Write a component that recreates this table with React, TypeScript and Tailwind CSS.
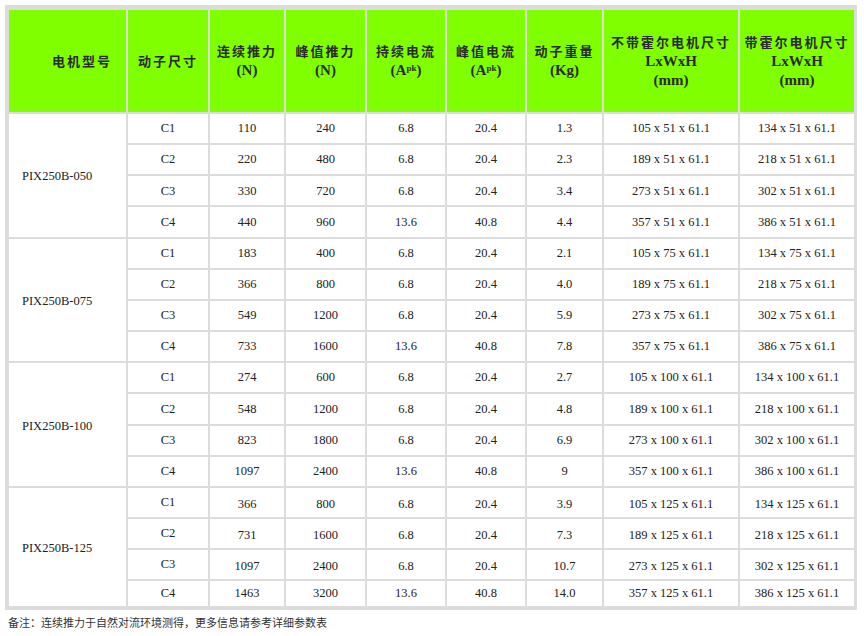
const serif = "font-['Liberation_Serif','Noto_Sans_CJK_SC',serif]";

type Row = { c: string; cont: string; peak: string; ic: string; ip: string; kg: string; a: string; b: string };

const groups: { model: string; rows: Row[] }[] = [
  {
    model: "PIX250B-050",
    rows: [
      { c: "C1", cont: "110", peak: "240", ic: "6.8", ip: "20.4", kg: "1.3", a: "105 x 51 x 61.1", b: "134 x 51 x 61.1" },
      { c: "C2", cont: "220", peak: "480", ic: "6.8", ip: "20.4", kg: "2.3", a: "189 x 51 x 61.1", b: "218 x 51 x 61.1" },
      { c: "C3", cont: "330", peak: "720", ic: "6.8", ip: "20.4", kg: "3.4", a: "273 x 51 x 61.1", b: "302 x 51 x 61.1" },
      { c: "C4", cont: "440", peak: "960", ic: "13.6", ip: "40.8", kg: "4.4", a: "357 x 51 x 61.1", b: "386 x 51 x 61.1" },
    ],
  },
  {
    model: "PIX250B-075",
    rows: [
      { c: "C1", cont: "183", peak: "400", ic: "6.8", ip: "20.4", kg: "2.1", a: "105 x 75 x 61.1", b: "134 x 75 x 61.1" },
      { c: "C2", cont: "366", peak: "800", ic: "6.8", ip: "20.4", kg: "4.0", a: "189 x 75 x 61.1", b: "218 x 75 x 61.1" },
      { c: "C3", cont: "549", peak: "1200", ic: "6.8", ip: "20.4", kg: "5.9", a: "273 x 75 x 61.1", b: "302 x 75 x 61.1" },
      { c: "C4", cont: "733", peak: "1600", ic: "13.6", ip: "40.8", kg: "7.8", a: "357 x 75 x 61.1", b: "386 x 75 x 61.1" },
    ],
  },
  {
    model: "PIX250B-100",
    rows: [
      { c: "C1", cont: "274", peak: "600", ic: "6.8", ip: "20.4", kg: "2.7", a: "105 x 100 x 61.1", b: "134 x 100 x 61.1" },
      { c: "C2", cont: "548", peak: "1200", ic: "6.8", ip: "20.4", kg: "4.8", a: "189 x 100 x 61.1", b: "218 x 100 x 61.1" },
      { c: "C3", cont: "823", peak: "1800", ic: "6.8", ip: "20.4", kg: "6.9", a: "273 x 100 x 61.1", b: "302 x 100 x 61.1" },
      { c: "C4", cont: "1097", peak: "2400", ic: "13.6", ip: "40.8", kg: "9", a: "357 x 100 x 61.1", b: "386 x 100 x 61.1" },
    ],
  },
  {
    model: "PIX250B-125",
    rows: [
      { c: "C1", cont: "366", peak: "800", ic: "6.8", ip: "20.4", kg: "3.9", a: "105 x 125 x 61.1", b: "134 x 125 x 61.1" },
      { c: "C2", cont: "731", peak: "1600", ic: "6.8", ip: "20.4", kg: "7.3", a: "189 x 125 x 61.1", b: "218 x 125 x 61.1" },
      { c: "C3", cont: "1097", peak: "2400", ic: "6.8", ip: "20.4", kg: "10.7", a: "273 x 125 x 61.1", b: "302 x 125 x 61.1" },
      { c: "C4", cont: "1463", peak: "3200", ic: "13.6", ip: "40.8", kg: "14.0", a: "357 x 125 x 61.1", b: "386 x 125 x 61.1" },
    ],
  },
];

const Head = ({ children, className = "" }: { children: React.ReactNode; className?: string }) => (
  <div className={`flex flex-col items-center justify-center bg-[#80ff00] text-center text-[13px] leading-[19px] font-bold text-[#2a2a2a] ${className}`}>
    {children}
  </div>
);

// CJK label line and latin unit line
const Cjk = ({ children }: { children: React.ReactNode }) => <span className="tracking-[2px]">{children}</span>;
const Unit = ({ children }: { children: React.ReactNode }) => <span className="text-[15px]">{children}</span>;
const Pk = () => <sup className="text-[9px] font-bold">pk</sup>;

export default function App() {
  return (
    <div className={`bg-white ${serif}`}>
      <div className="ml-[5px] mt-[5px] w-[852px] bg-[#dcdcdc] pt-[5px] pr-[3px] pb-[4px] pl-[4px]">
        <div className="grid grid-cols-[117px_80px_74px_79px_78px_78px_75px_134px_114px] grid-rows-[102px_repeat(12,29.17px)_29.4px_28.7px_28.7px_25.7px] gap-[2px]">
          <Head className="items-start pl-[43px]">
            <Cjk>电机型号</Cjk>
          </Head>
          <Head>
            <Cjk>动子尺寸</Cjk>
          </Head>
          <Head>
            <Cjk>连续推力</Cjk>
            <Unit>(N)</Unit>
          </Head>
          <Head>
            <Cjk>峰值推力</Cjk>
            <Unit>(N)</Unit>
          </Head>
          <Head>
            <Cjk>持续电流</Cjk>
            <Unit>
              (A<Pk />)
            </Unit>
          </Head>
          <Head>
            <Cjk>峰值电流</Cjk>
            <Unit>
              (A<Pk />)
            </Unit>
          </Head>
          <Head>
            <Cjk>动子重量</Cjk>
            <Unit>(Kg)</Unit>
          </Head>
          <Head className="leading-[18px]">
            <Cjk>不带霍尔电机尺寸</Cjk>
            <Unit>LxWxH</Unit>
            <Unit>(mm)</Unit>
          </Head>
          <Head className="leading-[18px]">
            <Cjk>带霍尔电机尺寸</Cjk>
            <Unit>LxWxH</Unit>
            <Unit>(mm)</Unit>
          </Head>

          {groups.map((g, gi) => (
            <>
              <div key={g.model} className="row-span-4 flex items-center bg-white pt-[3px] pl-[13px] text-[12.5px] text-[#222]">
                {g.model}
              </div>
              {g.rows.map((r, ri) => {
                const shift = gi === 3 && ri < 3 ? "pt-[4px]" : "";
                const vals = [r.cont, r.peak, r.ic, r.ip, r.kg, r.a, r.b];
                return (
                  <>
                    <div key={`${gi}-${ri}-c`} className="flex items-center justify-center bg-white text-[12.5px] text-[#222]">
                      {r.c}
                    </div>
                    {vals.map((v, vi) => (
                      <div key={`${gi}-${ri}-${vi}`} className={`flex items-center justify-center bg-white text-[12.5px] text-[#222] ${shift}`}>
                        {v}
                      </div>
                    ))}
                  </>
                );
              })}
            </>
          ))}
        </div>
      </div>
      <p className="mt-[5px] pl-[8px] font-['Noto_Sans_CJK_SC',sans-serif] text-[11px] leading-[14px] text-[#333]">
        备注：连续推力于自然对流环境测得，更多信息请参考详细参数表
      </p>
    </div>
  );
}
